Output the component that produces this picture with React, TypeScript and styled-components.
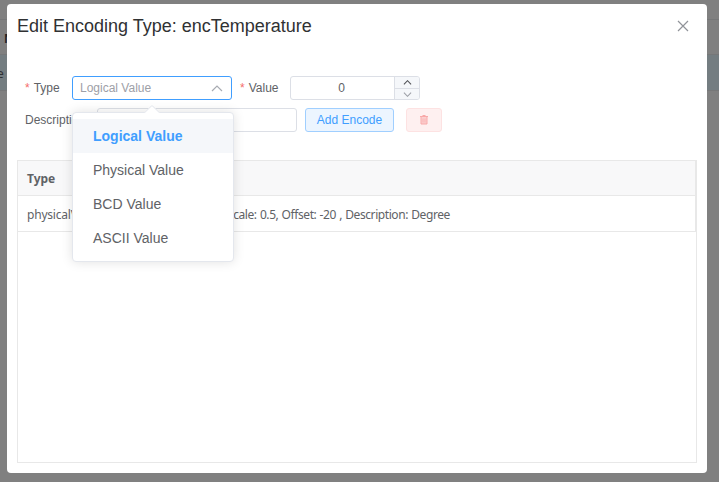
import React from "react";
import styled, { createGlobalStyle } from "styled-components";

const Global = createGlobalStyle`
  * { box-sizing: border-box; }
  body { margin: 0; background: #808080; overflow: hidden; font-family: "Liberation Sans", Arial, sans-serif; font-size: 12px; color: #606266; }
`;

const Page = styled.div`
  position: relative;
  width: 719px;
  height: 482px;
  overflow: hidden;
  background: #808080;
`;

const BackRow = styled.div<{ $h: number; $selected?: boolean }>`
  display: flex;
  align-items: center;
  height: ${(p) => p.$h}px;
  border-bottom: 1px solid #767778;
  background: ${(p) => (p.$selected ? "#747d81" : "#808080")};
  color: #303133;
  white-space: pre;
`;

const BackHead = styled.b`
  margin-left: 4px;
  padding-top: 2px;
  font-family: "Noto Sans", sans-serif;
  color: #222325;
`;

const BackCell = styled.span`
  margin-left: -3px;
  padding-top: 2px;
  font-family: "Noto Sans", sans-serif;
`;

const Dialog = styled.section`
  position: absolute;
  left: 7px;
  top: 4px;
  width: 700px;
  height: 469px;
  padding: 10px;
  border-radius: 4px;
  background: #fff;
  display: flex;
  flex-direction: column;
`;

const Header = styled.header`
  display: flex;
  justify-content: space-between;
  height: 62px;
`;

const Title = styled.h1`
  margin: 0;
  font-size: 18px;
  line-height: 24px;
  font-weight: 400;
  color: #303133;
`;

const Close = styled.button`
  width: 12px;
  height: 12px;
  margin: 6px 8px 0 0;
  padding: 0;
  border: 0;
  background: none;
  svg { display: block; }
`;

const FormRow = styled.div`
  display: flex;
  height: 24px;
  margin-bottom: 8px;
  padding-left: 8px;
`;

const Label = styled.label<{ $w: number; $required?: boolean }>`
  flex: none;
  width: ${(p) => p.$w}px;
  line-height: 24px;
  color: #606266;
  &::before {
    content: ${(p) => (p.$required ? '"*"' : "none")};
    margin-right: 4px;
    color: #f56c6c;
  }
`;

const Select = styled.div`
  position: relative;
  width: 160px;
  height: 24px;
  margin-right: 8px;
  padding: 0 8px 0 7px;
  display: flex;
  align-items: center;
  justify-content: space-between;
  border: 1px solid #409eff;
  border-radius: 3px;
  color: #9da0a7;
`;

const Menu = styled.ul`
  position: absolute;
  z-index: 2;
  left: -1px;
  top: 35px;
  width: 162px;
  height: 150px;
  margin: 0;
  padding: 6px 0;
  list-style: none;
  background: #fff;
  border: 1px solid #e4e7ed;
  border-radius: 4px;
  box-shadow: 0 0 12px rgba(0, 0, 0, 0.12);
  &::before {
    content: "";
    position: absolute;
    left: 73px;
    top: -6px;
    width: 10px;
    height: 10px;
    background: #fff;
    border: 1px solid #e4e7ed;
    border-right-color: transparent;
    border-bottom-color: transparent;
    border-radius: 2px 0 0 0;
    transform: rotate(45deg);
  }
`;

const Option = styled.li<{ $active?: boolean }>`
  position: relative;
  height: 34px;
  padding-left: 20px;
  line-height: 34px;
  font-size: 14px;
  font-weight: ${(p) => (p.$active ? 700 : 400)};
  color: ${(p) => (p.$active ? "#409eff" : "#606266")};
  background: ${(p) => (p.$active ? "#f5f7fa" : "#fff")};
`;

const NumberInput = styled.div`
  display: flex;
  width: 130px;
  height: 24px;
  border: 1px solid #dcdfe6;
  border-radius: 3px;
  overflow: hidden;
`;

const NumberValue = styled.span`
  flex: 1;
  padding-right: 2px;
  text-align: center;
  line-height: 22px;
`;

const Stepper = styled.div`
  display: flex;
  flex-direction: column;
  width: 25px;
  border-left: 1px solid #dcdfe6;
  background: #f5f7fa;
`;

const Step = styled.button`
  flex: 1;
  display: flex;
  align-items: center;
  justify-content: center;
  min-height: 0;
  padding: 0;
  border: 0;
  background: none;
  & + & { border-top: 1px solid #dcdfe6; flex: 0 0 11px; }
`;

const TextInput = styled.input`
  width: 200px;
  height: 24px;
  margin-right: 8px;
  border: 1px solid #dcdfe6;
  border-radius: 3px;
  background: #fff;
`;

const Button = styled.button<{ $danger?: boolean }>`
  display: flex;
  align-items: center;
  justify-content: center;
  width: ${(p) => (p.$danger ? 36 : 89)}px;
  height: 24px;
  margin-right: 12px;
  padding: 0;
  font: 12px "Liberation Sans", Arial, sans-serif;
  color: ${(p) => (p.$danger ? "#fab6b6" : "#409eff")};
  background: ${(p) => (p.$danger ? "#fef0f0" : "#ecf5ff")};
  border: 1px solid ${(p) => (p.$danger ? "#fde2e2" : "#a0cfff")};
  border-radius: 3px;
`;

const Table = styled.div`
  height: 303px;
  margin-top: 20px;
  border: 1px solid #e8e8e8;
  font-family: "Noto Sans", "Open Sans", sans-serif;
`;

const TableRow = styled.div<{ $head?: boolean }>`
  display: flex;
  align-items: center;
  height: ${(p) => (p.$head ? 35 : 36)}px;
  padding: ${(p) => (p.$head ? 0 : 2)}px 0 0 9px;
  border-bottom: 1px solid #e8e8e8;
  border-right: 1px solid #e8e8e8;
  background: ${(p) => (p.$head ? "#f8f8f9" : "#fff")};
  font-weight: ${(p) => (p.$head ? 700 : 400)};
  white-space: pre;
`;

const TypeCell = styled.span`
  width: 200px;
  letter-spacing: -0.2px;
`;

const DetailCell = styled.span`
  letter-spacing: -0.42px;
  word-spacing: 0.55px;
`;

const Chevron = ({ w, h, down, color }: { w: number; h: number; down?: boolean; color: string }) => (
  <svg width={w} height={h} viewBox="0 0 12 7" fill="none" stroke={color} strokeWidth={w < 12 ? 1.5 : 1.2}>
    <path d={down ? "M1 1l5 5 5-5" : "M1 6l5-5 5 5"} />
  </svg>
);

export default function App() {
  return (
    <>
      <Global />
      <Page>
        <BackRow $h={20} />
        <BackRow $h={35}><BackHead>N</BackHead></BackRow>
        <BackRow $h={36} $selected><BackCell>e</BackCell></BackRow>
        <Dialog>
          <Header>
            <Title>Edit Encoding Type: encTemperature</Title>
            <Close aria-label="Close">
              <svg width="12" height="12" viewBox="0 0 12 12" stroke="#909399" strokeWidth="1.2">
                <path d="M1 1l10 10M11 1L1 11" />
              </svg>
            </Close>
          </Header>
          <FormRow>
            <Label $w={47} $required>Type</Label>
            <Select>
              Logical Value
              <Chevron w={12} h={7} color="#a8abb2" />
              <Menu>
                <Option $active>Logical Value</Option>
                <Option>Physical Value</Option>
                <Option>BCD Value</Option>
                <Option>ASCII Value</Option>
              </Menu>
            </Select>
            <Label $w={50} $required>Value</Label>
            <NumberInput>
              <NumberValue>0</NumberValue>
              <Stepper>
                <Step aria-label="Increase"><Chevron w={9} h={5} color="#505256" /></Step>
                <Step aria-label="Decrease"><Chevron w={9} h={5} down color="#9c9fa6" /></Step>
              </Stepper>
            </NumberInput>
          </FormRow>
          <FormRow>
            <Label $w={72}>Description</Label>
            <TextInput aria-label="Description" />
            <Button>Add Encode</Button>
            <Button $danger aria-label="Delete">
              <svg width="10" height="10" viewBox="0 0 10 10" fill="none" stroke="#f8a9a9">
                <path d="M1 1.5h8M3.5.5h3" />
                <path d="M2 2v7h6V2" fill="#fcd0d0" />
                <path d="M4 3.5v4M6 3.5v4" strokeWidth=".7" />
              </svg>
            </Button>
          </FormRow>
          <Table>
            <TableRow $head>Type</TableRow>
            <TableRow>
              <TypeCell>physicalValue</TypeCell>
              <DetailCell>Scale: 0.5, Offset: -20 , Description: Degree</DetailCell>
            </TableRow>
          </Table>
        </Dialog>
      </Page>
    </>
  );
}
